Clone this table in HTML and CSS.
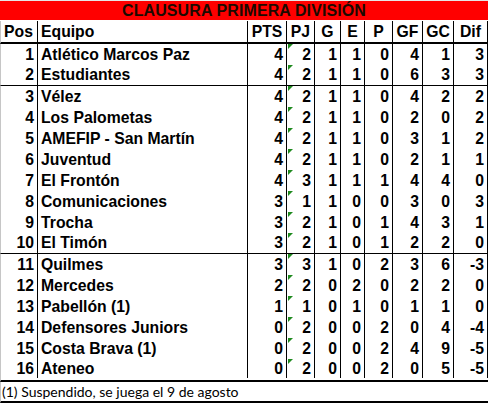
FILE: index.html
```html
<!DOCTYPE html>
<html lang="es">
<head>
<meta charset="utf-8">
<title>Clausura Primera División</title>
<link rel="stylesheet" href="styles.css">
</head>
<body>
<div class="sheet">
  <div class="title">CLAUSURA PRIMERA DIVISIÓN</div>
  <div class="row head">
    <div class="c pos l">Pos</div><div class="c team">Equipo</div><div class="c m">PTS</div><div class="c m">PJ</div><div class="c m">G</div><div class="c m">E</div><div class="c m">P</div><div class="c m">GF</div><div class="c m">GC</div><div class="c m">Dif</div>
  </div>
  <div class="row"><div class="c n">1</div><div class="c team">Atlético Marcos Paz</div><div class="c n">4</div><div class="c n pj">2</div><div class="c n">1</div><div class="c n">1</div><div class="c n">0</div><div class="c n">4</div><div class="c n">1</div><div class="c n">3</div></div>
  <div class="row sep"><div class="c n">2</div><div class="c team">Estudiantes</div><div class="c n">4</div><div class="c n pj">2</div><div class="c n">1</div><div class="c n">1</div><div class="c n">0</div><div class="c n">6</div><div class="c n">3</div><div class="c n">3</div></div>
  <div class="row"><div class="c n">3</div><div class="c team">Vélez</div><div class="c n">4</div><div class="c n pj">2</div><div class="c n">1</div><div class="c n">1</div><div class="c n">0</div><div class="c n">4</div><div class="c n">2</div><div class="c n">2</div></div>
  <div class="row"><div class="c n">4</div><div class="c team">Los Palometas</div><div class="c n">4</div><div class="c n pj">2</div><div class="c n">1</div><div class="c n">1</div><div class="c n">0</div><div class="c n">2</div><div class="c n">0</div><div class="c n">2</div></div>
  <div class="row"><div class="c n">5</div><div class="c team">AMEFIP - San Martín</div><div class="c n">4</div><div class="c n pj">2</div><div class="c n">1</div><div class="c n">1</div><div class="c n">0</div><div class="c n">3</div><div class="c n">1</div><div class="c n">2</div></div>
  <div class="row"><div class="c n">6</div><div class="c team">Juventud</div><div class="c n">4</div><div class="c n pj">2</div><div class="c n">1</div><div class="c n">1</div><div class="c n">0</div><div class="c n">2</div><div class="c n">1</div><div class="c n">1</div></div>
  <div class="row"><div class="c n">7</div><div class="c team">El Frontón</div><div class="c n">4</div><div class="c n pj">3</div><div class="c n">1</div><div class="c n">1</div><div class="c n">1</div><div class="c n">4</div><div class="c n">4</div><div class="c n">0</div></div>
  <div class="row"><div class="c n">8</div><div class="c team">Comunicaciones</div><div class="c n">3</div><div class="c n pj">1</div><div class="c n">1</div><div class="c n">0</div><div class="c n">0</div><div class="c n">3</div><div class="c n">0</div><div class="c n">3</div></div>
  <div class="row"><div class="c n">9</div><div class="c team">Trocha</div><div class="c n">3</div><div class="c n pj">2</div><div class="c n">1</div><div class="c n">0</div><div class="c n">1</div><div class="c n">4</div><div class="c n">3</div><div class="c n">1</div></div>
  <div class="row sep"><div class="c n">10</div><div class="c team">El Timón</div><div class="c n">3</div><div class="c n pj">2</div><div class="c n">1</div><div class="c n">0</div><div class="c n">1</div><div class="c n">2</div><div class="c n">2</div><div class="c n">0</div></div>
  <div class="row"><div class="c n">11</div><div class="c team">Quilmes</div><div class="c n">3</div><div class="c n pj">3</div><div class="c n">1</div><div class="c n">0</div><div class="c n">2</div><div class="c n">3</div><div class="c n">6</div><div class="c n">-3</div></div>
  <div class="row"><div class="c n">12</div><div class="c team">Mercedes</div><div class="c n">2</div><div class="c n pj">2</div><div class="c n">0</div><div class="c n">2</div><div class="c n">0</div><div class="c n">2</div><div class="c n">2</div><div class="c n">0</div></div>
  <div class="row"><div class="c n">13</div><div class="c team">Pabellón (1)</div><div class="c n">1</div><div class="c n pj">1</div><div class="c n">0</div><div class="c n">1</div><div class="c n">0</div><div class="c n">1</div><div class="c n">1</div><div class="c n">0</div></div>
  <div class="row"><div class="c n">14</div><div class="c team">Defensores Juniors</div><div class="c n">0</div><div class="c n pj">2</div><div class="c n">0</div><div class="c n">0</div><div class="c n">2</div><div class="c n">0</div><div class="c n">4</div><div class="c n">-4</div></div>
  <div class="row"><div class="c n">15</div><div class="c team">Costa Brava (1)</div><div class="c n">0</div><div class="c n pj">2</div><div class="c n">0</div><div class="c n">0</div><div class="c n">2</div><div class="c n">4</div><div class="c n">9</div><div class="c n">-5</div></div>
  <div class="row last"><div class="c n">16</div><div class="c team">Ateneo</div><div class="c n">0</div><div class="c n pj">2</div><div class="c n">0</div><div class="c n">0</div><div class="c n">2</div><div class="c n">0</div><div class="c n">5</div><div class="c n">-5</div></div>
  <div class="note">(1) Suspendido, se juega el 9 de agosto</div>
</div>
</body>
</html>
```

FILE: styles.css
```css
html, body {
  margin: 0;
  padding: 0;
  background: #ffffff;
}

.sheet {
  width: 488px;
  font-family: "Liberation Sans", Arial, sans-serif;
  font-weight: bold;
  font-size: 15.75px;
  color: #000;
}

.title {
  box-sizing: border-box;
  height: 21px;
  border-top: 1px solid #e6e6e6;
  border-bottom: 1px solid #ffffff;
  background: #ff0000;
  color: #1a0a00;
  font-size: 16px;
  line-height: 19px;
  text-align: center;
  letter-spacing: 0.1px;
}

.row {
  box-sizing: border-box;
  display: grid;
  grid-template-columns: 37px 210px 39px 28px 26px 24px 28px 30px 31px 34px;
  height: 21px;
  border-left: 1px solid #c6c6c6;
}

.row.head {
  height: 23px;
  border-bottom: 2px solid #000;
}

.row.sep {
  border-bottom: 1px solid #000;
}

.row.last {
  border-bottom: 2px solid #000;
  height: 23px;
  padding-bottom: 2px;
}

.c {
  position: relative;
  box-sizing: border-box;
  border-right: 1px solid #000;
  white-space: nowrap;
  overflow: visible;
  display: flex;
  align-items: center;
  line-height: 1;
}

.c.team {
  padding-left: 3px;
}

.c.l {
  padding-left: 3px;
}

.c.m {
  justify-content: center;
}

.c.n {
  justify-content: flex-end;
  padding-right: 3px;
}

.c.pj::before {
  content: "";
  position: absolute;
  left: 1px;
  top: 0;
  width: 0;
  height: 0;
  border-top: 5px solid #1f8a1f;
  border-right: 5px solid transparent;
}

.note {
  box-sizing: border-box;
  height: 21px;
  border-left: 1px solid #c6c6c6;
  border-bottom: 2px solid #000;
  padding-left: 1px;
  font-family: Lato, "Noto Sans", sans-serif;
  font-weight: normal;
  font-size: 14px;
  line-height: 19px;
  color: #000;
}
```
